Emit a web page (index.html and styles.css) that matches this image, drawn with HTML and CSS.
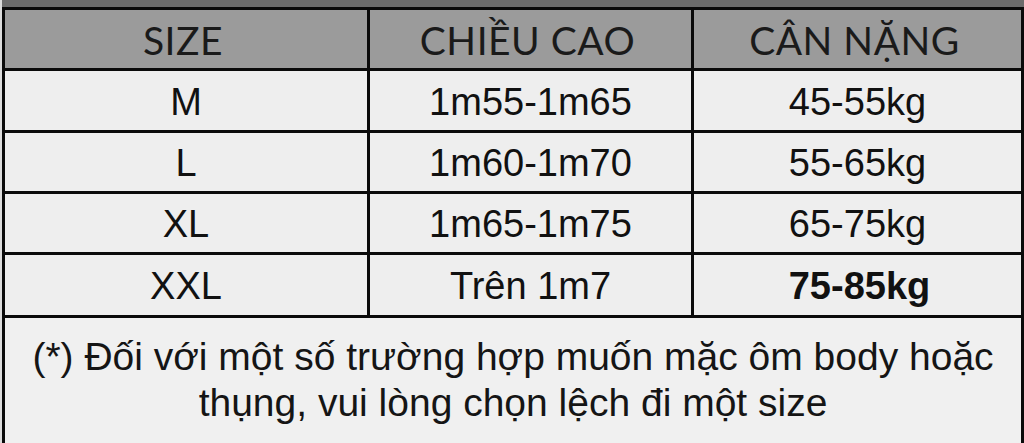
FILE: index.html
```html
<!DOCTYPE html>
<html lang="vi">
<head>
<meta charset="utf-8">
<title>Bảng size</title>
<link rel="stylesheet" href="styles.css">
</head>
<body>
<div class="page">
  <div class="topbar"></div>
  <div class="chart">
    <div class="cell head">SIZE</div>
    <div class="cell head">CHIỀU CAO</div>
    <div class="cell head">CÂN NẶNG</div>

    <div class="cell">M</div>
    <div class="cell">1m55-1m65</div>
    <div class="cell">45-55kg</div>

    <div class="cell">L</div>
    <div class="cell">1m60-1m70</div>
    <div class="cell">55-65kg</div>

    <div class="cell">XL</div>
    <div class="cell">1m65-1m75</div>
    <div class="cell">65-75kg</div>

    <div class="cell">XXL</div>
    <div class="cell">Trên 1m7</div>
    <div class="cell bold">75-85kg</div>

    <div class="cell note">(*) Đối với một số trường hợp muốn mặc ôm body hoặc<br>thụng, vui lòng chọn lệch đi một size</div>
  </div>
</div>
</body>
</html>
```
FILE: styles.css
```css
html, body {
  margin: 0;
  padding: 0;
}
body {
  width: 1024px;
  height: 443px;
  overflow: hidden;
  background: #dcdcdc;
  font-family: "Liberation Sans", Arial, sans-serif;
  color: #111;
}
.page {
  padding-left: 2px;
}
.topbar {
  height: 7px;
  background: #6c6c6c;
}
.chart {
  display: grid;
  grid-template-columns: 362px 321px 327px;
  grid-template-rows: 58px 59px 58px 58px 60px 140px;
  gap: 3px;
  background: #0a0a0a;
  border: 3px solid #0a0a0a;
  border-bottom: none;
  width: 1016px;
}
.cell {
  background: #eeeeee;
  display: flex;
  align-items: center;
  justify-content: center;
  font-size: 38px;
  padding-top: 3px;
  box-sizing: border-box;
}
.head {
  background: #9b9b9b;
  font-family: Lato, "Noto Sans", sans-serif;
  font-size: 39px;
  letter-spacing: 0.5px;
  color: #1a1a1a;
  padding-top: 1px;
  padding-right: 6px;
}
.bold {
  font-weight: bold;
  padding-left: 4px;
}
.note {
  grid-column: 1 / 4;
  background: #f0f0f0;
  display: block;
  text-align: center;
  font-size: 39px;
  line-height: 46px;
  padding-top: 16px;
  color: #151515;
}
```
